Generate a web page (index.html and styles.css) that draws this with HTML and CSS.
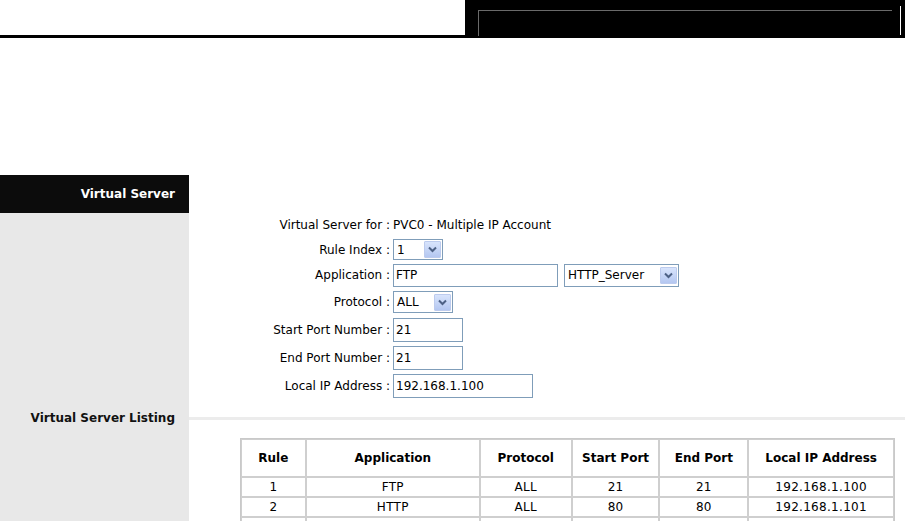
FILE: index.html
```html
<!DOCTYPE html>
<html>
<head>
<meta charset="utf-8">
<link rel="stylesheet" href="styles.css">
</head>
<body>
<div class="topbar">
  <div class="top-white"></div>
  <div class="top-black"><div class="top-frame"></div><div class="top-tick"></div></div>
</div>
<div class="top-rule"></div>
<div class="spacer"></div>
<div class="page">
  <div class="side side-head">Virtual Server</div>
  <div class="main-head"></div>

  <div class="side"></div>
  <div class="main">
    <div class="form">
      <div class="lbl r1">Virtual Server for :</div><div class="val r1">PVC0 - Multiple IP Account</div>
      <div class="lbl r2">Rule Index :</div><div class="val r2"><div class="sel w-rule"><span class="sel-text">1</span><span class="sel-btn"><svg width="9" height="7" viewBox="0 0 9 7"><path d="M1 1.5 L4.5 5 L8 1.5" fill="none" stroke="#4d6185" stroke-width="2"/></svg></span></div></div>
      <div class="lbl r3">Application :</div><div class="val r3"><div class="inp w-app">FTP</div><div class="sel w-http"><span class="sel-text">HTTP_Server</span><span class="sel-btn"><svg width="9" height="7" viewBox="0 0 9 7"><path d="M1 1.5 L4.5 5 L8 1.5" fill="none" stroke="#4d6185" stroke-width="2"/></svg></span></div></div>
      <div class="lbl r4">Protocol :</div><div class="val r4"><div class="sel w-proto"><span class="sel-text">ALL</span><span class="sel-btn"><svg width="9" height="7" viewBox="0 0 9 7"><path d="M1 1.5 L4.5 5 L8 1.5" fill="none" stroke="#4d6185" stroke-width="2"/></svg></span></div></div>
      <div class="lbl r5">Start Port Number :</div><div class="val r5"><div class="inp w-port">21</div></div>
      <div class="lbl r5">End Port Number :</div><div class="val r5"><div class="inp w-port">21</div></div>
      <div class="lbl r5">Local IP Address :</div><div class="val r5"><div class="inp w-ip">192.168.1.100</div></div>
    </div>
  </div>

  <div class="side side-label">Virtual Server Listing</div>
  <div class="main main-rule"><div class="rule-line"></div></div>

  <div class="side side-fill"></div>
  <div class="main">
    <table class="list">
      <tr><th class="c1">Rule</th><th class="c2">Application</th><th class="c3">Protocol</th><th class="c4">Start Port</th><th class="c5">End Port</th><th class="c6">Local IP Address</th></tr>
      <tr><td>1</td><td>FTP</td><td>ALL</td><td>21</td><td>21</td><td>192.168.1.100</td></tr>
      <tr><td>2</td><td>HTTP</td><td>ALL</td><td>80</td><td>80</td><td>192.168.1.101</td></tr>
      <tr><td>&nbsp;</td><td>&nbsp;</td><td>&nbsp;</td><td>&nbsp;</td><td>&nbsp;</td><td>&nbsp;</td></tr>
    </table>
  </div>
</div>
</body>
</html>
```
FILE: styles.css
```css
html, body { margin: 0; padding: 0; background: #fff; }
body { font-family: "DejaVu Sans", Verdana, sans-serif; font-size: 12px; color: #000; overflow: hidden; height: 521px; }

.topbar { display: flex; height: 35px; }
.top-white { width: 465px; background: #fff; }
.top-black { flex: 1; background: #000; position: relative; }
.top-frame { position: absolute; left: 13px; top: 10px; width: 413px; height: 25px; border-top: 1px solid #6a6a6a; border-left: 1px solid #6a6a6a; }
.top-tick { position: absolute; left: 435px; top: 6px; width: 1px; height: 29px; background: #fff; }
.top-rule { height: 3px; background: #000; }
.spacer { height: 137px; }

.page { display: grid; grid-template-columns: 189px 1fr; }
.side { background: #e8e8e8; }
.side-head { background: #0c0c0c; color: #fff; font-weight: bold; height: 38px; display: flex; align-items: center; justify-content: flex-end; padding-right: 14px; box-sizing: border-box; }
.main-head { height: 38px; }
.side-label { display: flex; align-items: center; justify-content: flex-end; padding-right: 14px; font-weight: bold; color: #111; height: 36px; }
.main-rule { display: flex; align-items: center; height: 36px; }
.rule-line { height: 3px; background: #ececec; width: 100%; }
.side-fill { height: 100px; }

.form { display: grid; grid-template-columns: 201px auto; column-gap: 3px; justify-content: start; }
.lbl { text-align: right; display: flex; align-items: center; justify-content: flex-end; white-space: nowrap; }
.val { display: flex; align-items: center; gap: 6px; white-space: nowrap; }
.r1 { height: 24px; }
.r2 { height: 25px; }
.r3 { height: 26px; }
.r4 { height: 28px; }
.r5 { height: 28px; }

.inp { border: 1px solid #7f9db9; height: 22px; box-sizing: border-box; padding-left: 2px; display: flex; align-items: center; background: #fff; }
.w-app { width: 165px; height: 23px; }
.w-port { width: 70px; height: 24px; }
.w-ip { width: 140px; height: 24px; }

.sel { border: 1px solid #7f9db9; height: 22px; box-sizing: border-box; display: flex; align-items: center; justify-content: space-between; padding: 1px; background: #fff; }
.sel-text { padding-left: 2px; }
.sel-btn { width: 17px; height: 17px; background: linear-gradient(#d8e4fc, #b4c7f1); border: 1px solid #bccbee; box-sizing: border-box; display: flex; align-items: center; justify-content: center; border-radius: 1px; }
.w-rule { width: 50px; height: 21px; }
.w-http { width: 115px; height: 23px; }
.w-proto { width: 60px; height: 22px; }

.list { margin-left: 51px; margin-top: 2px; border-collapse: separate; border-spacing: 0; border: 1px solid #c9c9c9; width: 655px; }
.list th, .list td { border: 1px solid #cfcfcf; text-align: center; padding: 0; white-space: nowrap; }
.list th { height: 36px; font-weight: bold; }
.list td { height: 18px; letter-spacing: 0.3px; }
.c1 { width: 63px; } .c2 { width: 173px; } .c3 { width: 90px; } .c4 { width: 86px; } .c5 { width: 87px; } .c6 { width: 144px; }
```
